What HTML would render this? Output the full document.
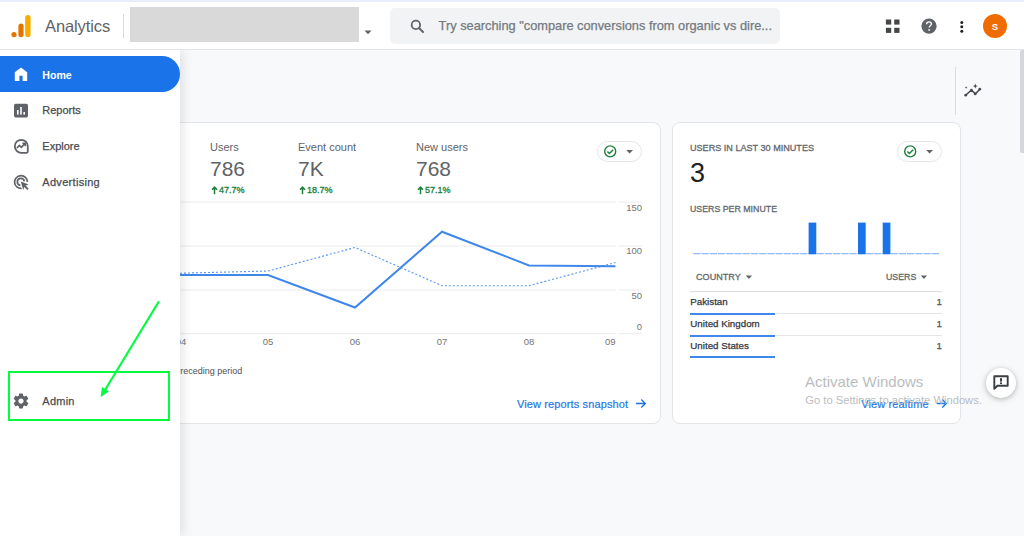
<!DOCTYPE html>
<html>
<head>
<meta charset="utf-8">
<title>Analytics</title>
<style>
*{box-sizing:border-box;margin:0;padding:0}
html,body{width:1024px;height:536px;overflow:hidden;background:#f8f9fa;font-family:"Liberation Sans",sans-serif;}
body{position:relative}
.abs{position:absolute}
#topstrip{left:0;top:0;width:1024px;height:2px;background:#e8eefb}
#header{z-index:0;left:0;top:2px;width:1024px;height:48px;background:#fff;border-bottom:1px solid #e3e5e8}
#title{left:45px;top:16px;font-size:16.5px;color:#5f6368;line-height:20px;letter-spacing:-0.1px}
#hdiv{left:123px;top:14px;width:1px;height:24px;background:#dadce0}
#redact{left:130px;top:7px;width:229px;height:35px;background:#d9d9d9}
#search{left:390px;top:8px;width:390px;height:36px;background:#f1f3f4;border-radius:5px}
#searchtxt{left:438.6px;top:17.5px;font-size:12.8px;-webkit-text-stroke:0.25px #747a80;color:#747a80;line-height:16px;white-space:nowrap}
#sidebar{left:0;top:0;width:180px;height:486px;background:#fff;box-shadow:3px 0 10px rgba(60,64,67,.13)}
.nav{left:42.3px;font-size:11px;color:#484b4f;line-height:14px;white-space:nowrap;-webkit-text-stroke:0.25px #484b4f}
#homepill{left:0;top:56px;width:180px;height:36px;background:#1a73e8;border-radius:0 18px 18px 0}
.card{background:#fff;border:1px solid #e2e4e8;border-radius:8px}
.mlabel{font-size:11px;color:#5f6368;line-height:14px;white-space:nowrap}
.mval{font-size:21px;color:#5f6368;line-height:24px;white-space:nowrap}
.mdelta{font-size:9px;color:#188038;line-height:12px;white-space:nowrap;-webkit-text-stroke:0.3px #188038}
.axis{font-size:9.5px;color:#757575;line-height:12px;white-space:nowrap}
.pill{width:45px;height:21px;border:1px solid #e4e6ea;border-radius:11px;background:#fff}
.caps{font-size:9.6px;color:#63676c;line-height:12px;white-space:nowrap;-webkit-text-stroke:0.3px #63676c;transform-origin:0 50%}
.crow{font-size:9.75px;color:#34373b;line-height:12px;white-space:nowrap;-webkit-text-stroke:0.25px #34373b}
.link{font-size:11px;color:#2478e8;line-height:14px;white-space:nowrap;-webkit-text-stroke:0.2px #2478e8;letter-spacing:0.13px}
</style>
</head>
<body>
<div class="abs" id="topstrip"></div>
<div class="abs" id="header"></div>

<!-- logo -->
<svg class="abs" style="left:8px;top:12px" width="28" height="28" viewBox="0 0 28 28">
  <circle cx="6" cy="22.6" r="2.6" fill="#e37400"/>
  <rect x="10.4" y="11.6" width="5.2" height="13.6" rx="2.6" fill="#e37400"/>
  <rect x="17.2" y="3" width="5.4" height="22.2" rx="2.7" fill="#f9ab00"/>
</svg>
<div class="abs" id="title">Analytics</div>
<div class="abs" id="hdiv"></div>
<div class="abs" id="redact"></div>
<svg class="abs" style="left:364px;top:30px" width="8" height="5" viewBox="0 0 8 5"><path d="M0.5 0.5h7L4 4.2z" fill="#5f6368"/></svg>

<div class="abs" id="search"></div>
<svg class="abs" style="left:409px;top:18px" width="18" height="18" viewBox="0 0 18 18">
  <circle cx="6.9" cy="6.9" r="4.2" fill="none" stroke="#5f6368" stroke-width="1.8"/>
  <path d="M10 10L14 14" stroke="#5f6368" stroke-width="2" stroke-linecap="round"/>
</svg>
<div class="abs" id="searchtxt">Try searching "compare conversions from organic vs dire...</div>

<!-- header right icons -->
<svg class="abs" style="left:885px;top:19px" width="15" height="15" viewBox="0 0 15 15">
  <rect x="0.9" y="0.5" width="5.3" height="5.1" fill="#444746"/><rect x="9.2" y="0.5" width="5.3" height="5.1" fill="#444746"/>
  <rect x="0.9" y="8.8" width="5.3" height="5.1" fill="#444746"/><rect x="9.2" y="8.8" width="5.3" height="5.1" fill="#444746"/>
</svg>
<svg class="abs" style="left:920px;top:17px" width="18" height="18" viewBox="0 0 18 18">
  <circle cx="9" cy="9.2" r="7.6" fill="#5f6368"/>
  <path d="M6.6 7.2c0-1.4 1-2.4 2.4-2.4s2.4 1 2.4 2.2c0 1.6-2.3 1.8-2.3 3.6" fill="none" stroke="#fff" stroke-width="1.3"/>
  <circle cx="9.1" cy="12.9" r="0.9" fill="#fff"/>
</svg>
<svg class="abs" style="left:959px;top:20px" width="6" height="14" viewBox="0 0 6 14">
  <circle cx="2.8" cy="2.4" r="1.5" fill="#202124"/><circle cx="2.8" cy="6.8" r="1.5" fill="#202124"/><circle cx="2.8" cy="11.2" r="1.5" fill="#202124"/>
</svg>
<div class="abs" style="left:983px;top:14px;width:24px;height:24px;border-radius:12px;background:#ef6c00"></div>
<div class="abs" style="left:983px;top:20.5px;width:24px;text-align:center;font-size:9.5px;font-weight:bold;color:#fff;line-height:12px">S</div>

<!-- main content area items -->
<div class="abs" style="left:955px;top:67px;width:1px;height:48px;background:#dadce0"></div>
<svg class="abs" style="left:963px;top:82px" width="20" height="18" viewBox="0 0 20 18">
  <path d="M2.7 13.2L8.4 8L12.3 11.9L16.8 7.2" fill="none" stroke="#44474b" stroke-width="1.5" stroke-linejoin="round" stroke-linecap="round"/>
  <circle cx="2.7" cy="13.2" r="1.35" fill="#44474b"/><circle cx="8.4" cy="8" r="1.3" fill="#44474b"/><circle cx="12.3" cy="11.9" r="1.3" fill="#44474b"/><circle cx="16.8" cy="7.2" r="1.35" fill="#44474b"/>
  <path d="M12.3 1.6l.7 1.8 1.8.7-1.800.7-.7 1.800-.700-1.800-1.800-.7 1.800-.7z" fill="#44474b"/>
  <path d="M3.100 4.300l.4 1 1 .4-1 .4-.4 1-.4-1-1-.4 1-.4z" fill="#44474b"/>
</svg>
<!-- scrollbar -->
<div class="abs" style="left:1020px;top:50px;width:4px;height:103px;background:#d5d7dc;border-radius:2px 0 0 2px"></div>

<!-- left card -->
<div class="abs card" style="left:100px;top:122px;width:561px;height:302px"></div>
<div class="abs mlabel" style="left:210px;top:140px">Users</div>
<div class="abs mval" style="left:210px;top:157px">786</div>
<svg class="abs" style="left:211px;top:186px" width="7" height="9" viewBox="0 0 7 9"><path d="M3.5 8.2V1.6M1 3.8L3.5 1.2L6 3.8" fill="none" stroke="#188038" stroke-width="1.5"/></svg>
<div class="abs mdelta" style="left:219px;top:184px">47.7%</div>
<div class="abs mlabel" style="left:298px;top:140px">Event count</div>
<div class="abs mval" style="left:298px;top:157px">7K</div>
<svg class="abs" style="left:299px;top:186px" width="7" height="9" viewBox="0 0 7 9"><path d="M3.5 8.2V1.6M1 3.8L3.5 1.2L6 3.8" fill="none" stroke="#188038" stroke-width="1.5"/></svg>
<div class="abs mdelta" style="left:307px;top:184px">18.7%</div>
<div class="abs mlabel" style="left:416px;top:140px">New users</div>
<div class="abs mval" style="left:416px;top:157px">768</div>
<svg class="abs" style="left:417px;top:186px" width="7" height="9" viewBox="0 0 7 9"><path d="M3.5 8.2V1.6M1 3.8L3.5 1.2L6 3.8" fill="none" stroke="#188038" stroke-width="1.5"/></svg>
<div class="abs mdelta" style="left:425px;top:184px">57.1%</div>

<div class="abs pill" style="left:597px;top:141px"></div>
<svg class="abs" style="left:603px;top:144px" width="34" height="15" viewBox="0 0 34 15">
  <circle cx="7.2" cy="7.4" r="5.5" fill="none" stroke="#188038" stroke-width="1.4"/>
  <path d="M4.4 7.6l2 2 3.8-3.9" fill="none" stroke="#188038" stroke-width="1.4"/>
  <path d="M23.2 6h6.8l-3.4 3.6z" fill="#5f6368"/>
</svg>

<!-- chart -->
<svg class="abs" style="left:100px;top:195px" width="560" height="160" viewBox="100 195 560 160">
  <g stroke="#efefef" stroke-width="1.25">
    <path d="M100 202H615.5M619 202H642"/>
    <path d="M100 246H615.5M619 246H642"/>
    <path d="M100 290H615.5M619 290H642"/>
    <path d="M100 333.5H615.5M619 333.5H642"/>
  </g>
  <path d="M100 273.3L181 273.2L268 271L355 247.5L442 285.7L529 285.7L615.5 262.5" fill="none" stroke="#5b98f2" stroke-width="1.15" stroke-dasharray="2 2"/>
  <path d="M100 275L181 275L268 275L355 307.5L442 231.7L529 265.4L615.5 266.3" fill="none" stroke="#3f87ea" stroke-width="2" stroke-linejoin="miter"/>
</svg>
<div class="abs axis" style="left:612px;top:202px;width:30px;text-align:right">150</div>
<div class="abs axis" style="left:612px;top:245px;width:30px;text-align:right">100</div>
<div class="abs axis" style="left:612px;top:290px;width:30px;text-align:right">50</div>
<div class="abs axis" style="left:612px;top:321px;width:30px;text-align:right">0</div>
<div class="abs axis" style="left:166px;top:336px;width:30px;text-align:center">04</div>
<div class="abs axis" style="left:253px;top:336px;width:30px;text-align:center">05</div>
<div class="abs axis" style="left:340px;top:336px;width:30px;text-align:center">06</div>
<div class="abs axis" style="left:427px;top:336px;width:30px;text-align:center">07</div>
<div class="abs axis" style="left:514px;top:336px;width:30px;text-align:center">08</div>
<div class="abs axis" style="left:595px;top:336px;width:30px;text-align:right;padding-right:9.5px">09</div>
<div class="abs axis" id="prec" style="left:174.3px;top:365px;color:#4d5156;font-size:9px">Preceding period</div>

<div class="abs link" style="left:516.9px;top:397.2px">View reports snapshot</div>
<svg class="abs" style="left:635.4px;top:397.8px" width="12" height="11" viewBox="0 0 12 11"><path d="M1 5.5h9M6.3 1.5l4 4-4 4" fill="none" stroke="#1a73e8" stroke-width="1.3"/></svg>

<!-- right card -->
<div class="abs card" style="left:672px;top:122px;width:289px;height:302px"></div>
<div class="abs caps" style="left:690.3px;top:142.4px;transform:scaleX(0.947)">USERS IN LAST 30 MINUTES</div>
<div class="abs" style="left:690px;top:158px;font-size:27px;color:#202124;line-height:30px">3</div>
<div class="abs pill" style="left:897px;top:141px"></div>
<svg class="abs" style="left:903px;top:144px" width="34" height="15" viewBox="0 0 34 15">
  <circle cx="7.2" cy="7.4" r="5.5" fill="none" stroke="#188038" stroke-width="1.4"/>
  <path d="M4.4 7.6l2 2 3.8-3.9" fill="none" stroke="#188038" stroke-width="1.4"/>
  <path d="M23.2 6h6.8l-3.4 3.6z" fill="#5f6368"/>
</svg>
<div class="abs caps" style="left:690.3px;top:203px;transform:scaleX(0.917)">USERS PER MINUTE</div>
<svg class="abs" style="left:690px;top:220px" width="256" height="38" viewBox="690 220 256 38">
  <path d="M693.3 253.6H940" stroke="#93b9f8" stroke-width="1.3" stroke-dasharray="7.3 0.92"/>
  <rect x="808.6" y="222.6" width="7.7" height="31.6" fill="#1a73e8"/>
  <rect x="858" y="222.6" width="7.7" height="31.6" fill="#1a73e8"/>
  <rect x="882.7" y="222.6" width="7.7" height="31.6" fill="#1a73e8"/>
</svg>
<div class="abs caps" style="left:696.1px;top:270.8px;transform:scaleX(0.947)">COUNTRY</div>
<svg class="abs" style="left:745px;top:274.5px" width="8" height="5" viewBox="0 0 8 5"><path d="M0.8 0.6h6.2L3.9 4z" fill="#5f6368"/></svg>
<div class="abs caps" style="left:885.6px;top:270.8px;transform:scaleX(0.918)">USERS</div>
<svg class="abs" style="left:920px;top:274.5px" width="8" height="5" viewBox="0 0 8 5"><path d="M0.8 0.6h6.2L3.9 4z" fill="#5f6368"/></svg>
<div class="abs" style="left:690px;top:291px;width:252px;height:1px;background:#dadce0"></div>
<div class="abs crow" style="left:690.3px;top:296.1px">Pakistan</div>
<div class="abs crow" style="left:912px;top:296.1px;width:30px;text-align:right;color:#5f6368">1</div>
<div class="abs" style="left:690px;top:313px;width:252px;height:1px;background:#e3e5e8"></div>
<div class="abs" style="left:690px;top:312.5px;width:85px;height:2px;background:#3f87ea"></div>
<div class="abs crow" style="left:690.3px;top:317.8px">United Kingdom</div>
<div class="abs crow" style="left:912px;top:317.8px;width:30px;text-align:right;color:#5f6368">1</div>
<div class="abs" style="left:690px;top:335px;width:252px;height:1px;background:#e3e5e8"></div>
<div class="abs" style="left:690px;top:334.5px;width:85px;height:2px;background:#3f87ea"></div>
<div class="abs crow" style="left:690.3px;top:339.5px">United States</div>
<div class="abs crow" style="left:912px;top:339.5px;width:30px;text-align:right;color:#5f6368">1</div>
<div class="abs" style="left:690px;top:356px;width:85px;height:2px;background:#3f87ea"></div>

<div class="abs link" style="left:861.2px;top:397.2px">View realtime</div>
<svg class="abs" style="left:935.6px;top:397.8px" width="12" height="11" viewBox="0 0 12 11"><path d="M1 5.5h9M6.3 1.5l4 4-4 4" fill="none" stroke="#1a73e8" stroke-width="1.3"/></svg>

<!-- watermark -->
<div class="abs" style="left:805px;top:373px;font-size:15px;color:#b0b2b5;line-height:18px;white-space:nowrap;opacity:.85">Activate Windows</div>
<div class="abs" style="left:805.3px;top:392.6px;font-size:11.2px;color:#b0b2b5;line-height:14px;white-space:nowrap;opacity:.85">Go to Settings to activate Windows.</div>

<!-- feedback fab -->
<div class="abs" style="left:986px;top:368px;width:30px;height:30px;border-radius:15px;background:#fff;box-shadow:0 1px 4px rgba(60,64,67,.3),0 2px 8px rgba(60,64,67,.12)"></div>
<svg class="abs" style="left:992px;top:374px" width="18" height="17" viewBox="0 0 18 17">
  <path d="M2.3 2.200h13.4v9.600H5.400L2.300 14.800z" fill="none" stroke="#3c4043" stroke-width="1.9" stroke-linejoin="round"/>
  <rect x="8" y="4.200" width="2" height="3.400" fill="#3c4043"/><rect x="8" y="8.400" width="2" height="1.700" fill="#3c4043"/>
</svg>

<!-- sidebar -->
<div class="abs" style="left:0;top:50px;width:200px;height:486px;overflow:hidden"><div class="abs" id="sidebar"></div></div>
<div class="abs" id="homepill"></div>
<svg class="abs" style="left:13px;top:66px" width="16" height="16" viewBox="0 0 16 16">
  <path d="M8 1.6L1.8 6.2V15H6.4V9.8H9.6V15H14.2V6.2z" fill="#fff"/>
</svg>
<div class="abs nav" style="top:67.8px;color:#fff;font-weight:bold;font-size:10.6px;-webkit-text-stroke:0">Home</div>

<svg class="abs" style="left:13px;top:103px" width="16" height="16" viewBox="0 0 16 16">
  <rect x="1" y="0.8" width="14" height="13.6" rx="1.6" fill="#5f6368"/>
  <rect x="4" y="7" width="1.6" height="4.6" fill="#fff"/><rect x="7.2" y="4" width="1.6" height="7.6" fill="#fff"/><rect x="10.4" y="9" width="1.6" height="2.6" fill="#fff"/>
</svg>
<div class="abs nav" style="top:103.2px">Reports</div>

<svg class="abs" style="left:13px;top:138px" width="17" height="17" viewBox="0 0 17 17">
  <path d="M8.3 1.8a6.5 6.5 0 1 0 0 13h5.3a1.2 1.2 0 0 0 1.2-1.2V8.3A6.5 6.5 0 0 0 8.3 1.8z" fill="none" stroke="#5f6368" stroke-width="1.8"/>
  <path d="M3.9 10l2.5-2.5 1.9 1.9 3.4-3.5" fill="none" stroke="#5f6368" stroke-width="1.7"/>
  <path d="M9.4 5.3h2.9v2.9" fill="none" stroke="#5f6368" stroke-width="1.6"/>
</svg>
<div class="abs nav" style="top:139.2px">Explore</div>

<svg class="abs" style="left:13px;top:174px" width="17" height="17" viewBox="0 0 17 17">
  <path d="M8.6 14.4A6.4 6.4 0 1 1 14.4 8" fill="none" stroke="#5f6368" stroke-width="1.7"/>
  <path d="M7.4 11.3A3.5 3.5 0 1 1 11.3 7.3" fill="none" stroke="#5f6368" stroke-width="1.7"/>
  <path d="M7.8 7.6l7.8 2.9-3 1.1 3.1 3.1-1.3 1.3-3.1-3.1-1.1 3z" fill="#5f6368"/>
</svg>
<div class="abs nav" style="top:174.9px;letter-spacing:0.3px">Advertising</div>

<svg class="abs" style="left:12.1px;top:391.5px" width="18" height="18" viewBox="0 0 24 24">
  <path fill="#5f6368" d="M19.43 12.98c.04-.32.07-.64.07-.98s-.03-.66-.07-.98l2.11-1.65c.19-.15.24-.42.12-.64l-2-3.46c-.12-.22-.39-.3-.61-.22l-2.49 1c-.52-.4-1.08-.73-1.69-.98l-.38-2.65C14.46 2.18 14.25 2 14 2h-4c-.25 0-.46.18-.49.42l-.38 2.65c-.61.25-1.17.59-1.69.98l-2.49-1c-.23-.09-.49 0-.61.22l-2 3.46c-.13.22-.07.49.12.64l2.11 1.65c-.04.32-.07.65-.07.98s.03.66.07.98l-2.11 1.65c-.19.15-.24.42-.12.64l2 3.46c.12.22.39.3.61.22l2.49-1c.52.4 1.08.73 1.69.98l.38 2.65c.03.24.24.42.49.42h4c.25 0 .46-.18.49-.42l.38-2.65c.61-.25 1.17-.59 1.69-.98l2.49 1c.23.09.49 0 .61-.22l2-3.46c.12-.22.07-.49-.12-.64l-2.11-1.65zM12 15.5c-1.93 0-3.500-1.570-3.500-3.500s1.570-3.500 3.500-3.500 3.500 1.570 3.500 3.500-1.570 3.500-3.500 3.500z"/>
</svg>
<div class="abs nav" style="top:393.6px;letter-spacing:0.25px">Admin</div>

<!-- annotation -->
<div class="abs" style="left:8px;top:371.4px;width:162px;height:49.4px;border:2.4px solid #05fb42"></div>
<svg class="abs" style="left:90px;top:295px" width="80" height="110" viewBox="90 295 80 110">
  <path d="M159 301.2L105 390" stroke="#05fb42" stroke-width="2.2" fill="none"/>
  <path d="M100.6 397.3L102 387L108.9 391.300z" fill="#05fb42"/>
</svg>
</body>
</html>
